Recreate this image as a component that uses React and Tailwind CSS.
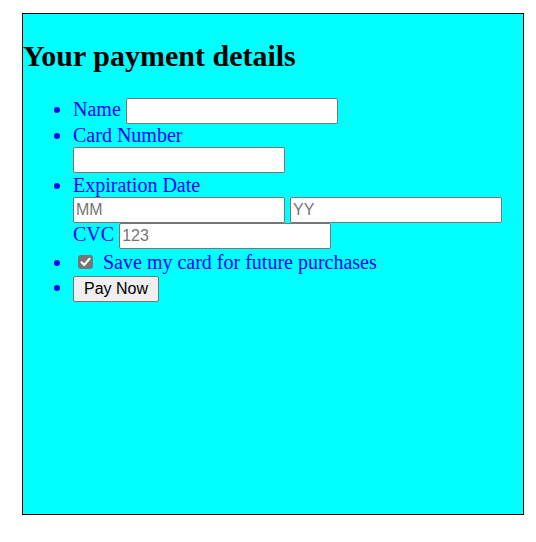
export default function App() {
  const field =
    "inline-block align-baseline h-[26px] w-[212px] rounded-[2px] border border-[#767676] bg-white px-[2px] text-[16px] leading-[normal] text-black font-['Liberation_Sans',Arial,sans-serif] placeholder:text-[#757575] outline-none";

  return (
    <div className="min-h-screen bg-white pl-[22px] pt-[13px]">
      <div className="h-[502px] w-[502px] border border-black bg-[#00ffff] font-['Liberation_Serif','Times_New_Roman',serif]">
        <h1 className="mt-[24px] text-[30px] font-bold leading-[35px] text-black">
          Your payment details
        </h1>

        <ul className="mt-[25px] list-disc pl-[50px] text-[20px] leading-[23px] text-[#0000ff]">
          <li>
            Name <input type="text" className={field} />
          </li>
          <li>
            Card Number
            <br />
            <input type="text" className={`${field} mb-[1px]`} />
          </li>
          <li>
            Expiration Date
            <br />
            <input type="text" placeholder="MM" className={field} />{' '}
            <input type="text" placeholder="YY" className={field} />
            <br />
            CVC <input type="text" placeholder="123" className={`${field} mb-[2px]`} />
          </li>
          <li>
            <span className="ml-[5px] mr-[5px] inline-block h-[14px] w-[15px] rounded-[3px] bg-[#767676] align-baseline">
              <svg viewBox="0 0 15 14" className="block h-[14px] w-[15px]">
                <path
                  d="M3.5 7.2 L6.2 10 L11.5 3.8"
                  fill="none"
                  stroke="white"
                  strokeWidth="2.2"
                  strokeLinecap="round"
                  strokeLinejoin="round"
                />
              </svg>
            </span>{' '}
            Save my card for future purchases
          </li>
          <li>
            <button
              type="button"
              className="mt-[2px] inline-block h-[26px] w-[86px] rounded-[2px] border border-[#767676] bg-[#efefef] align-baseline text-[16px] leading-[normal] text-black font-['Liberation_Sans',Arial,sans-serif]"
            >
              Pay Now
            </button>
          </li>
        </ul>
      </div>
    </div>
  );
}
